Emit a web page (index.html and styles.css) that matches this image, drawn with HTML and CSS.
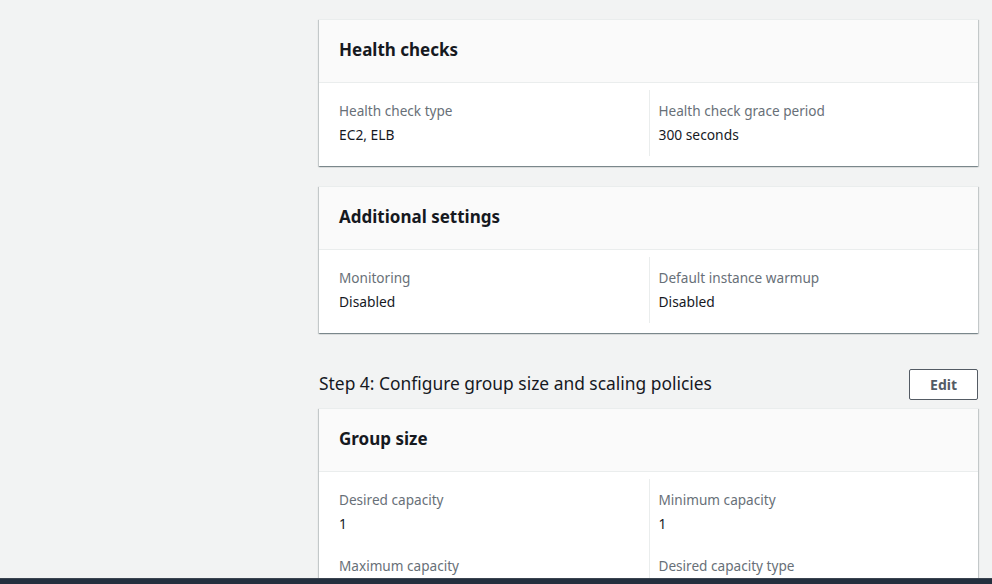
FILE: index.html
```html
<!DOCTYPE html>
<html lang="en">
<head>
<meta charset="utf-8">
<title>Review</title>
<link rel="stylesheet" href="styles.css">
</head>
<body>
<main class="page">
  <section class="card">
    <div class="card-header"><h2 class="card-title">Health checks</h2></div>
    <div class="card-body">
      <div class="cols">
        <div class="col">
          <div class="item"><div class="label">Health check type</div><div class="value">EC2, ELB</div></div>
        </div>
        <div class="col col-split">
          <div class="item"><div class="label">Health check grace period</div><div class="value">300 seconds</div></div>
        </div>
      </div>
    </div>
  </section>

  <section class="card">
    <div class="card-header"><h2 class="card-title">Additional settings</h2></div>
    <div class="card-body">
      <div class="cols">
        <div class="col">
          <div class="item"><div class="label">Monitoring</div><div class="value">Disabled</div></div>
        </div>
        <div class="col col-split">
          <div class="item"><div class="label">Default instance warmup</div><div class="value">Disabled</div></div>
        </div>
      </div>
    </div>
  </section>

  <div class="step-head">
    <h2 class="step-title">Step 4: Configure group size and scaling policies</h2>
    <button class="btn" type="button">Edit</button>
  </div>

  <section class="card">
    <div class="card-header"><h2 class="card-title">Group size</h2></div>
    <div class="card-body">
      <div class="cols">
        <div class="col">
          <div class="item"><div class="label">Desired capacity</div><div class="value">1</div></div>
          <div class="item"><div class="label">Maximum capacity</div><div class="value">1</div></div>
        </div>
        <div class="col col-split">
          <div class="item"><div class="label">Minimum capacity</div><div class="value">1</div></div>
          <div class="item"><div class="label">Desired capacity type</div><div class="value">Units (number of instances)</div></div>
        </div>
      </div>
    </div>
  </section>
</main>
<div class="footer-bar"></div>
</body>
</html>
```

FILE: styles.css
```css
html, body {
  margin: 0;
  padding: 0;
}
body {
  background: #f2f3f3;
  font-family: "Noto Sans", "Open Sans", "Liberation Sans", sans-serif;
  color: #16191f;
  font-size: 14px;
  line-height: 20px;
}
.page {
  padding: 19px 14px 40px 319px;
  display: flex;
  flex-direction: column;
}
.card {
  background: #ffffff;
  border-top: 1px solid #eaeded;
  box-shadow: 0 1px 1px 0 rgba(0, 28, 36, 0.3), 1px 1px 1px 0 rgba(0, 28, 36, 0.15), -1px 1px 1px 0 rgba(0, 28, 36, 0.15);
  margin-bottom: 20px;
}
.card-header {
  background: #fafafa;
  border-bottom: 1px solid #eaeded;
  padding: 19px 20px 21px;
}
.card-title {
  margin: 0;
  font-size: 17px;
  line-height: 22px;
  font-weight: 700;
  color: #16191f;
}
.card-body {
  padding: 7px 20px 10px;
}
.cols {
  display: grid;
  grid-template-columns: 1fr 1fr;
}
.col {
  padding: 11px 0;
  display: flex;
  flex-direction: column;
  gap: 22px;
}
.col-split {
  border-left: 1px solid #eaeded;
  padding-left: 9px;
}
.label {
  color: #687078;
  font-size: 13.6px;
}
.value {
  color: #16191f;
  font-size: 13.8px;
  margin-top: 4px;
}
.step-head {
  display: flex;
  align-items: center;
  justify-content: space-between;
  margin-top: 16px;
  margin-bottom: 8px;
}
.step-title {
  margin: 0 0 3px;
  font-size: 17.4px;
  line-height: 22px;
  font-weight: 400;
  color: #16191f;
}
.btn {
  font-family: inherit;
  font-size: 14px;
  line-height: 21px;
  font-weight: 700;
  color: #545b64;
  background: #ffffff;
  border: 1px solid #545b64;
  border-radius: 2px;
  padding: 4px 20px;
  cursor: pointer;
}
.footer-bar {
  position: fixed;
  left: 0;
  right: 0;
  bottom: 0;
  height: 5px;
  background: #232f3e;
  border-top: 1px solid #3b4450;
}
```
